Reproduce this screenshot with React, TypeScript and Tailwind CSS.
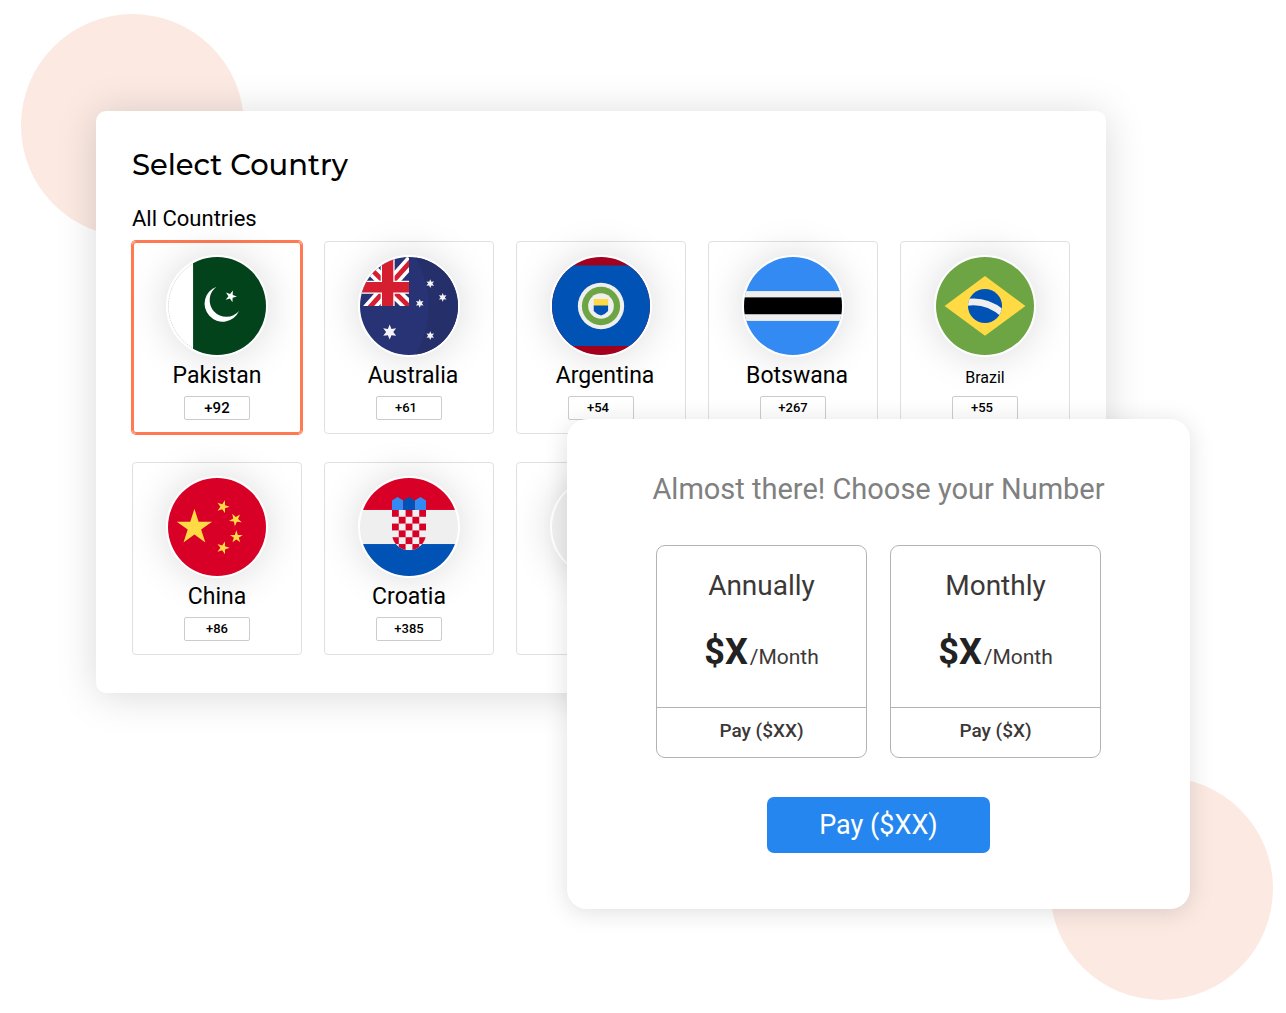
import { useState } from "react";
import type { ReactNode } from "react";
import clsx from "clsx";

interface Country {
  name: string;
  code: string;
  flag: ReactNode;
  nameClass?: string;
  codeClass?: string;
}

// points of a star polygon, rotated clockwise by `turn` degrees
function star(cx: number, cy: number, r: number, tips = 5, turn = 0, depth = 0.382) {
  const pts: string[] = [];
  for (let i = 0; i < tips * 2; i++) {
    const a = ((i * 180) / tips + turn - 90) * (Math.PI / 180);
    const d = i % 2 === 0 ? r : r * depth;
    pts.push(`${(cx + d * Math.cos(a)).toFixed(1)},${(cy + d * Math.sin(a)).toFixed(1)}`);
  }
  return pts.join(" ");
}

const pakistan = (
  <>
    <rect width="512" height="512" fill="#fff" />
    <circle cx="256" cy="256" r="254" fill="none" stroke="#b9cbc0" strokeWidth="4" strokeDasharray="8 5" />
    <rect x="131" width="381" height="512" fill="#02431c" />
    <path d="M254 155A94 94 0 1 0 371 282A87 87 0 1 1 254 155Z" fill="#fff" />
    <polygon points={star(328, 205, 32, 5, 20)} fill="#fff" />
  </>
);

const australia = (
  <>
    <rect width="512" height="512" fill="#273375" />
    <path d="M290 0Q430 256 290 512H512V0Z" fill="#252f6a" />
    <clipPath id="canton">
      <rect width="256" height="256" />
    </clipPath>
    <g clipPath="url(#canton)">
      <path d="M34 40L270 272M270 18L40 275" stroke="#fff" strokeWidth="62" />
      <path d="M34 40L270 272M270 18L40 275" stroke="#d51f30" strokeWidth="25" />
      <path d="M108 0H181V256H108ZM0 124H256V192H0Z" fill="#fff" />
      <path d="M115 0H174V256H115ZM0 131H256V185H0Z" fill="#d51f30" />
    </g>
    <g fill="#f3f3f8">
      <polygon points={star(155, 392, 39, 6, 0, 0.48)} />
      <polygon points={star(367, 139, 23, 6, 0, 0.48)} />
      <polygon points={star(432, 211, 23, 6, 0, 0.48)} />
      <polygon points={star(312, 242, 23, 6, 0, 0.48)} />
      <polygon points={star(367, 411, 23, 6, 0, 0.48)} />
    </g>
  </>
);

const argentina = (
  <>
    <rect width="512" height="512" fill="#a2001d" />
    <rect y="44" width="512" height="421" fill="#0052b4" />
    <circle cx="256" cy="256" r="121" fill="#efefef" />
    <circle cx="256" cy="256" r="100" fill="#6da544" />
    <circle cx="256" cy="256" r="67" fill="#efefef" />
    <path d="M218 220H293V256H218Z" fill="#ffda44" />
    <path d="M218 254H293V282Q280 298 256 305Q231 298 218 282Z" fill="#0052b4" />
  </>
);

const botswana = (
  <>
    <rect width="512" height="512" fill="#338af3" />
    <rect y="178" width="512" height="156" fill="#efefef" />
    <rect y="211" width="512" height="88" fill="#000" />
  </>
);

const brazil = (
  <>
    <rect width="512" height="512" fill="#6da544" />
    <path d="M256 99L467 256L256 411L45 256Z" fill="#ffda44" />
    <clipPath id="globe">
      <circle cx="256" cy="256" r="89" />
    </clipPath>
    <g clipPath="url(#globe)">
      <rect width="512" height="512" fill="#0052b4" />
      <path d="M155 238Q265 219 352 298" fill="none" stroke="#efefef" strokeWidth="36" />
    </g>
  </>
);

const china = (
  <>
    <rect width="512" height="512" fill="#d80027" />
    <g fill="#ffda44">
      <polygon points={star(138, 258, 97)} />
      <polygon points={star(287, 150, 35, 5, 18)} />
      <polygon points={star(353, 217, 35, 5, -30)} />
      <polygon points={star(357, 308, 35)} />
      <polygon points={star(287, 365, 35, 5, 18)} />
    </g>
  </>
);

const checks = [0, 1, 2, 3, 4, 5].flatMap((row) =>
  [0, 1, 2, 3, 4].filter((col) => (row + col) % 2 === 0).map((col) => ({ row, col }))
);

const croatia = (
  <>
    <rect width="512" height="512" fill="#efefef" />
    <rect width="512" height="167" fill="#d80027" />
    <rect y="345" width="512" height="167" fill="#0052b4" />
    <clipPath id="shield">
      <path d="M167 167H345V289A89 89 0 0 1 167 289Z" />
    </clipPath>
    <g clipPath="url(#shield)">
      <rect x="167" y="167" width="178" height="212" fill="#efefef" />
      {checks.map(({ row, col }) => (
        <rect key={`${row}-${col}`} x={167 + col * 35.6} y={167 + row * 35.6} width="35.6" height="35.6" fill="#d80027" />
      ))}
    </g>
    <path d="M167 167V118L196 99L226 118V167ZM286 167V118L316 99L345 118V167Z" fill="#338af3" />
    <path d="M226 167V118L256 99L286 118V167Z" fill="#0052b4" />
  </>
);

const blank = <rect width="512" height="512" fill="#efefef" />;

const countries: Country[] = [
  { name: "Pakistan", code: "+92", flag: pakistan },
  { name: "Australia", code: "+61", flag: australia, nameClass: "pl-2", codeClass: "pr-1.5" },
  { name: "Argentina", code: "+54", flag: argentina, nameClass: "pl-2", codeClass: "pr-1.5" },
  { name: "Botswana", code: "+267", flag: botswana, nameClass: "pl-2" },
  { name: "Brazil", code: "+55", flag: brazil, nameClass: "text-base pt-0.5", codeClass: "pr-1.5" },
  { name: "China", code: "+86", flag: china },
  { name: "Croatia", code: "+385", flag: croatia },
  { name: "", code: "", flag: blank },
];

const plans = [
  { title: "Annually", pay: "Pay ($XX)" },
  { title: "Monthly", pay: "Pay ($X)" },
];

function CountryCard({ country, selected, onSelect }: { country: Country; selected: boolean; onSelect: () => void }) {
  return (
    <button
      type="button"
      aria-pressed={selected}
      aria-label={country.name ? undefined : "More countries"}
      onClick={onSelect}
      className={clsx(
        "flex h-[193px] flex-col items-center rounded border pt-[13px]",
        selected
          ? "border-[#ff7a52] ring-1 ring-[#ff7a52] inset-ring-1 inset-ring-[#ff7a52]"
          : "border-[#e0e0e0]"
      )}
    >
      <svg
        viewBox="0 0 512 512"
        aria-hidden="true"
        className="size-[102px] shrink-0 rounded-full border-2 border-white bg-white shadow-[0_0_40px_rgba(0,0,0,0.15)]"
      >
        {country.flag}
      </svg>
      <span
        className={clsx("mt-px h-9 leading-9", country.nameClass, !country.nameClass?.includes("text-") && "text-[23px]")}
      >
        {country.name}
      </span>
      {country.code && (
        <span
          className={clsx(
            "mt-[2px] h-6 w-[66px] rounded-xs border border-[#cccccc] text-center leading-[22px] font-medium",
            selected ? "text-[15px]" : "text-[13px]",
            country.codeClass
          )}
        >
          {country.code}
        </span>
      )}
    </button>
  );
}

export default function App() {
  const [selected, setSelected] = useState("Pakistan");

  return (
    <main className="relative overflow-hidden bg-white pt-[111px] pb-[104px] pl-24 font-[Roboto,sans-serif] text-black">
      {/* Background circles */}
      <div className="absolute top-[14px] left-[21px] size-[223px] rounded-full bg-[#fbe9e2]" />
      <div className="absolute right-[13px] bottom-[13px] size-[223px] rounded-full bg-[#fbe9e2]" />

      {/* Country picker */}
      <section className="relative mr-[180px] rounded-[10px] bg-white px-9 pt-9 pb-[38px] shadow-[0_3px_40px_rgba(0,0,0,0.15)]">
        <h1 className="font-[Montserrat,Inter,sans-serif] text-[29px] leading-9 font-medium">Select Country</h1>
        <h2 className="mt-[22px] mb-2 text-[22px] leading-7">All Countries</h2>
        <div className="grid grid-cols-5 gap-x-[22px] gap-y-7">
          {countries.map((country) => (
            <CountryCard
              key={country.name}
              country={country}
              selected={selected === country.name}
              onSelect={() => setSelected(country.name)}
            />
          ))}
        </div>
      </section>

      {/* Plan dialog */}
      <section className="relative mt-[-274px] mr-24 ml-auto flex w-[623px] flex-col items-center rounded-[20px] bg-white pt-[50px] pb-14 shadow-[0_3px_24px_rgba(0,0,0,0.13)]">
        <h2 className="text-[29px] leading-10 text-[#808080]">Almost there! Choose your Number</h2>
        <div className="mt-9 flex gap-[23px]">
          {plans.map((plan) => (
            <article key={plan.title} className="w-[211px] rounded-[9px] border border-[#b3b3b3] text-center text-[#3c3838]">
              <h3 className="pt-6 text-[28px] leading-8">{plan.title}</h3>
              <p className="mt-[30px] pb-7 leading-10">
                <span className="text-[36px] font-bold text-[#222222]">$X</span>
                <span className="pl-[2px] text-[21px]">/Month</span>
              </p>
              <button type="button" className="h-[50px] w-full border-t border-[#b3b3b3] pb-0.5 text-[19px] font-medium">
                {plan.pay}
              </button>
            </article>
          ))}
        </div>
        <button type="button" className="mt-[39px] h-14 w-[223px] rounded-[7px] bg-[#2686ef] text-[27px] text-white">
          Pay ($XX)
        </button>
      </section>
    </main>
  );
}
